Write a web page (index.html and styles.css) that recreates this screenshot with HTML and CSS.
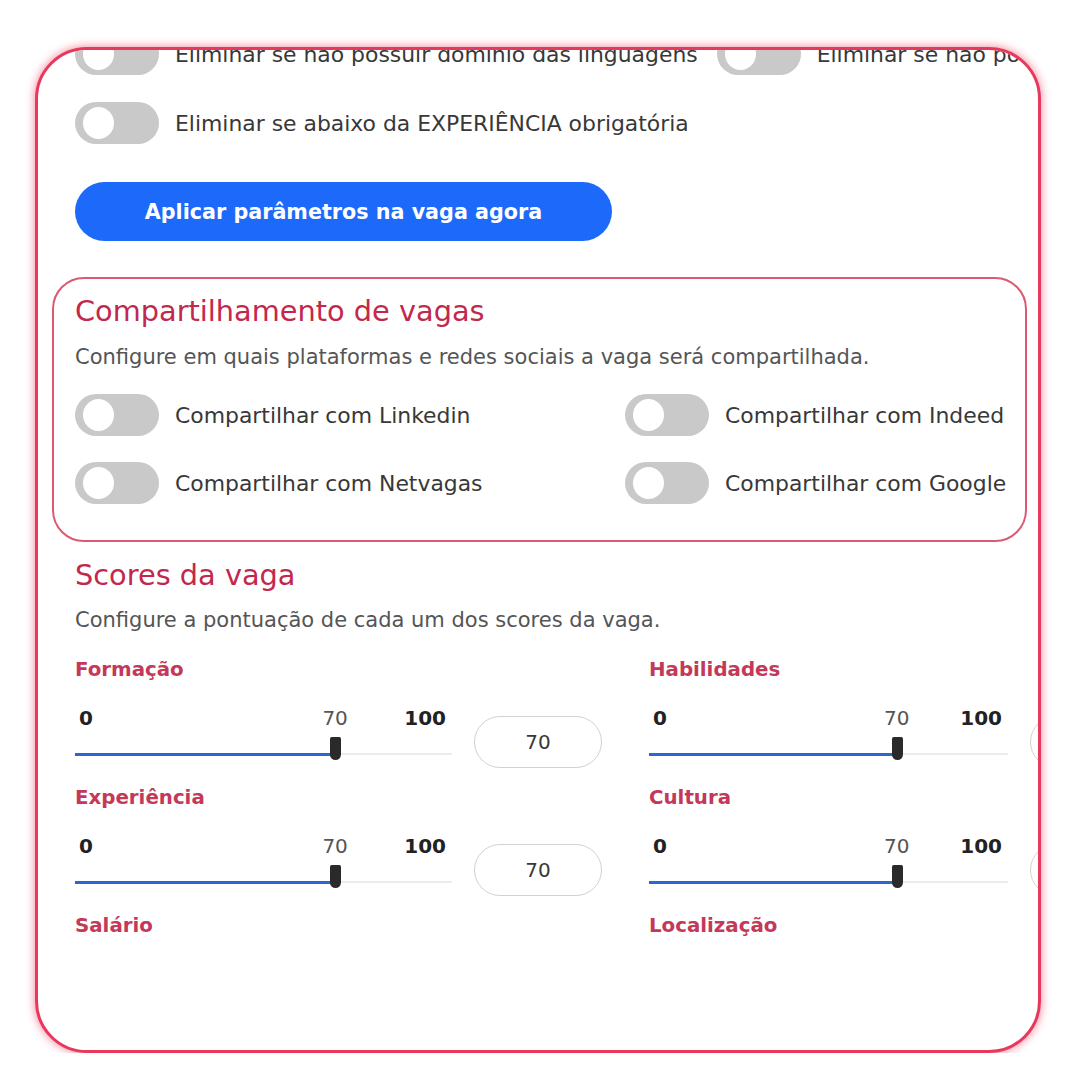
FILE: index.html
```html
<!DOCTYPE html>
<html lang="pt-BR">
<head>
<meta charset="utf-8">
<title>Parâmetros da vaga</title>
<link rel="stylesheet" href="styles.css">
</head>
<body>
<div class="frame">
  <div class="content">
    <div class="toggle-row">
      <div class="option">
        <span class="switch"><span class="knob"></span></span>
        <span class="option-label">Eliminar se não possuir domínio das linguagens</span>
      </div>
      <div class="option">
        <span class="switch"><span class="knob"></span></span>
        <span class="option-label">Eliminar se não possuir domínio dos idiomas</span>
      </div>
    </div>
    <div class="toggle-row second">
      <div class="option">
        <span class="switch"><span class="knob"></span></span>
        <span class="option-label">Eliminar se abaixo da EXPERIÊNCIA obrigatória</span>
      </div>
    </div>

    <button class="apply-btn" type="button">Aplicar parâmetros na vaga agora</button>

    <section class="share-box">
      <h2 class="section-title">Compartilhamento de vagas</h2>
      <p class="section-desc">Configure em quais plataformas e redes sociais a vaga será compartilhada.</p>
      <div class="share-grid">
        <div class="option">
          <span class="switch"><span class="knob"></span></span>
          <span class="option-label">Compartilhar com Linkedin</span>
        </div>
        <div class="option">
          <span class="switch"><span class="knob"></span></span>
          <span class="option-label">Compartilhar com Indeed</span>
        </div>
        <div class="option">
          <span class="switch"><span class="knob"></span></span>
          <span class="option-label">Compartilhar com Netvagas</span>
        </div>
        <div class="option">
          <span class="switch"><span class="knob"></span></span>
          <span class="option-label">Compartilhar com Google</span>
        </div>
      </div>
    </section>

    <section class="scores">
      <h2 class="section-title">Scores da vaga</h2>
      <p class="section-desc">Configure a pontuação de cada um dos scores da vaga.</p>
      <div class="score-grid">
        <div class="score">
          <div class="score-label">Formação</div>
          <div class="score-row">
            <div class="slider">
              <div class="scale"><span class="min">0</span><span class="current" style="left:69%">70</span><span class="max">100</span></div>
              <div class="track"><div class="fill" style="width:69%"></div><div class="thumb" style="left:69%"></div></div>
            </div>
            <div class="value-box">70</div>
          </div>
        </div>
        <div class="score">
          <div class="score-label">Habilidades</div>
          <div class="score-row">
            <div class="slider">
              <div class="scale"><span class="min">0</span><span class="current" style="left:69%">70</span><span class="max">100</span></div>
              <div class="track"><div class="fill" style="width:69%"></div><div class="thumb" style="left:69%"></div></div>
            </div>
            <div class="value-box">70</div>
          </div>
        </div>
        <div class="score">
          <div class="score-label">Experiência</div>
          <div class="score-row">
            <div class="slider">
              <div class="scale"><span class="min">0</span><span class="current" style="left:69%">70</span><span class="max">100</span></div>
              <div class="track"><div class="fill" style="width:69%"></div><div class="thumb" style="left:69%"></div></div>
            </div>
            <div class="value-box">70</div>
          </div>
        </div>
        <div class="score">
          <div class="score-label">Cultura</div>
          <div class="score-row">
            <div class="slider">
              <div class="scale"><span class="min">0</span><span class="current" style="left:69%">70</span><span class="max">100</span></div>
              <div class="track"><div class="fill" style="width:69%"></div><div class="thumb" style="left:69%"></div></div>
            </div>
            <div class="value-box">70</div>
          </div>
        </div>
        <div class="score">
          <div class="score-label">Salário</div>
        </div>
        <div class="score">
          <div class="score-label">Localização</div>
        </div>
      </div>
    </section>
  </div>
</div>
</body>
</html>
```

FILE: styles.css
```css
* {
  box-sizing: border-box;
}

html, body {
  margin: 0;
  padding: 0;
  background: #ffffff;
}

body {
  font-family: "DejaVu Sans", "Liberation Sans", sans-serif;
  color: #383838;
}

.frame {
  margin: 47px 0 0 35px;
  width: 1006px;
  height: 1006px;
  border: 3px solid #e8385c;
  border-radius: 52px;
  overflow: hidden;
  box-shadow: 0 0 9px 1px rgba(236, 60, 96, 0.55);
  background: #ffffff;
}

.content {
  margin-top: -17px;
  padding-left: 37px;
}

/* toggles */
.toggle-row {
  display: flex;
  gap: 19px;
  white-space: nowrap;
}

.toggle-row.second {
  margin-top: 27px;
}

.option {
  display: flex;
  align-items: center;
  gap: 16px;
  white-space: nowrap;
}

.switch {
  flex: none;
  position: relative;
  width: 84px;
  height: 42px;
  border-radius: 21px;
  background: #c9c9c9;
}

.knob {
  position: absolute;
  left: 8px;
  top: 5px;
  width: 31px;
  height: 32px;
  border-radius: 50%;
  background: #ffffff;
}

.option-label {
  font-size: 21.9px;
  color: #383838;
}

/* button */
.apply-btn {
  display: block;
  margin-top: 38px;
  width: 537px;
  height: 59px;
  border: none;
  border-radius: 30px;
  background: #1c69fa;
  color: #ffffff;
  font-family: "DejaVu Sans", "Liberation Sans", sans-serif;
  font-weight: bold;
  font-size: 20.7px;
  padding: 0;
}

/* sections */
.share-box {
  margin-top: 36px;
  margin-left: -23px;
  width: 975px;
  border: 2px solid #db5a72;
  border-radius: 32px;
  padding: 16px 0 36px 21px;
}

.section-title {
  margin: 0;
  font-size: 28.8px;
  line-height: 32px;
  font-weight: normal;
  color: #c3284c;
}

.section-desc {
  margin: 18px 0 0;
  font-size: 21px;
  line-height: 24px;
  color: #555555;
  white-space: nowrap;
}

.share-grid {
  margin-top: 25px;
  display: grid;
  grid-template-columns: 550px 1fr;
  row-gap: 26px;
}

.scores {
  margin-top: 17px;
}

.scores .section-desc {
  margin-top: 17px;
}

.score-grid {
  margin-top: 26px;
  display: grid;
  grid-template-columns: 527px 509px;
  column-gap: 47px;
  row-gap: 18px;
}

.score-label {
  font-size: 19.8px;
  line-height: 24px;
  font-weight: bold;
  color: #c43858;
}

.score-row {
  margin-top: 24px;
  display: flex;
  align-items: flex-start;
  gap: 22px;
}

.slider {
  flex: 1;
}

.scale {
  position: relative;
  display: flex;
  justify-content: space-between;
  padding: 0 6px 0 4px;
  font-size: 20px;
  line-height: 24px;
  font-weight: bold;
  color: #222222;
}

.scale .current {
  position: absolute;
  top: 0;
  transform: translateX(-50%);
  font-weight: normal;
  color: #555555;
}

.track {
  position: relative;
  margin-top: 7px;
  height: 23px;
}

.track::before {
  content: "";
  position: absolute;
  left: 0;
  right: 0;
  bottom: 5px;
  height: 2px;
  background: #ececec;
}

.fill {
  position: absolute;
  left: 0;
  bottom: 4px;
  height: 3px;
  background: #2b66d6;
}

.thumb {
  position: absolute;
  top: 0;
  width: 11px;
  height: 23px;
  margin-left: -5px;
  border-radius: 2px 2px 6px 6px;
  background: #2a2a2a;
}

.value-box {
  flex: none;
  margin-top: 10px;
  width: 128px;
  height: 52px;
  border: 1.5px solid #d2d2d2;
  border-radius: 26px;
  display: flex;
  align-items: center;
  justify-content: center;
  font-size: 20px;
  color: #383838;
}
```
